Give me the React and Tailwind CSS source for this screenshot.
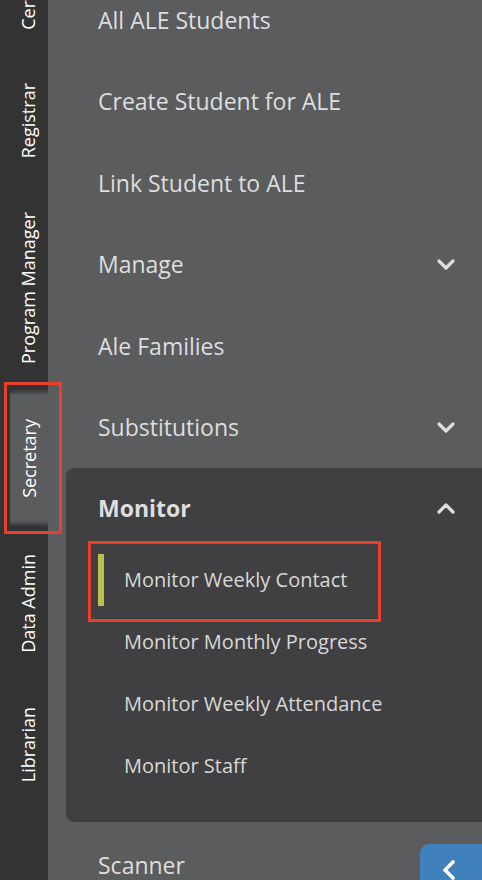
import React from "react";

const railTabs = [
  { label: "Certification", h: "h-[56px]", cut: true },
  { label: "Registrar", h: "h-[130px]" },
  { label: "Program Manager", h: "h-[204px]" },
  { label: "Secretary", h: "h-[136px]", active: true },
  { label: "Data Admin", h: "h-[154px]" },
  { label: "Librarian", h: "h-[129px]" },
];

const mainItems = [
  { label: "All ALE Students" },
  { label: "Create Student for ALE" },
  { label: "Link Student to ALE" },
  { label: "Manage", chevron: "down" },
  { label: "Ale Families" },
  { label: "Substitutions", chevron: "down" },
];

const monitorItems = [
  { label: "Monitor Weekly Contact", active: true },
  { label: "Monitor Monthly Progress" },
  { label: "Monitor Weekly Attendance" },
  { label: "Monitor Staff" },
];

function Chevron({ dir = "down", className = "" }) {
  const points = dir === "down" ? "3,3 10,10 17,3" : "3,10 10,3 17,10";
  return (
    <svg viewBox="0 0 20 13" className={className} fill="none">
      <polyline
        points={points}
        stroke="currentColor"
        strokeWidth="3.2"
        strokeLinecap="round"
        strokeLinejoin="round"
      />
    </svg>
  );
}

function RailTab({ tab }) {
  return (
    <div
      className={`relative flex ${tab.cut ? "items-end pb-[26px]" : "items-center"} justify-center ${tab.h} ${
        tab.active
          ? "ml-[10px] bg-[#5b5c5e] shadow-[inset_0_5px_3px_-2px_rgba(0,0,0,0.35),inset_0_-5px_3px_-2px_rgba(0,0,0,0.35)]"
          : "pl-[8px]"
      }`}
    >
      <span className="whitespace-nowrap text-[18px] font-medium text-white [writing-mode:vertical-rl] rotate-180">
        {tab.label}
      </span>
    </div>
  );
}

export default function App() {
  return (
    <div
      className="relative flex h-[880px] w-[482px] overflow-hidden bg-[#5b5c5e]"
      style={{ fontFamily: '"Open Sans", "Noto Sans", sans-serif' }}
    >
      {/* Rail */}
      <div className="flex w-[48px] shrink-0 flex-col bg-[#333333]">
        {railTabs.map((t) => (
          <RailTab key={t.label} tab={t} />
        ))}
      </div>

      {/* Menu panel */}
      <div className="flex flex-1 flex-col -mt-[21px]">
        {mainItems.map((item) => (
          <div
            key={item.label}
            className="flex h-[81.5px] shrink-0 items-center justify-between pl-[50px] pr-[26px] text-[23px] text-[#dedede]"
          >
            <span>{item.label}</span>
            {item.chevron && <Chevron dir="down" className="h-[13px] w-[20px] text-[#dedede]" />}
          </div>
        ))}

        {/* Monitor group */}
        <div className="ml-[18px] flex shrink-0 flex-col rounded-l-[8px] bg-[#404042] pb-[25px]">
          <div className="flex h-[81px] items-center justify-between pl-[32px] pr-[26px] text-[23px] font-bold text-[#dedede]">
            <span>Monitor</span>
            <Chevron dir="up" className="h-[13px] w-[20px] text-[#dedede]" />
          </div>
          {monitorItems.map((item) => (
            <div key={item.label} className="relative flex h-[62px] items-center pl-[32px] text-[20px] text-[#d8d8d8]">
              <span className={`h-[52px] w-[6px] ${item.active ? "bg-[#bcc04c]" : ""}`} />
              <span className="ml-[20px]">{item.label}</span>
              {item.active && (
                <div className="absolute left-[22px] top-[-8px] h-[81px] w-[293px] border-[3.5px] border-[#e8402c]" />
              )}
            </div>
          ))}
        </div>

        <div className="mt-[2px] flex h-[81.5px] shrink-0 items-center pl-[50px] text-[23px] text-[#dedede]">
          <span>Scanner</span>
        </div>
      </div>

      {/* Secretary annotation */}
      <div className="absolute left-[4px] top-[382px] h-[152px] w-[58px] border-[3.5px] border-[#e8402c]" />

      {/* Collapse button */}
      <div className="absolute left-[420px] top-[844px] flex h-[50px] w-[70px] items-start rounded-tl-[9px] bg-[#4080bb] pl-[22px] pt-[15px]">
        <svg viewBox="0 0 14 22" className="h-[22px] w-[14px]" fill="none">
          <polyline points="11,3 3,11 11,19" stroke="white" strokeWidth="3.6" strokeLinecap="round" strokeLinejoin="round" />
        </svg>
      </div>
    </div>
  );
}
